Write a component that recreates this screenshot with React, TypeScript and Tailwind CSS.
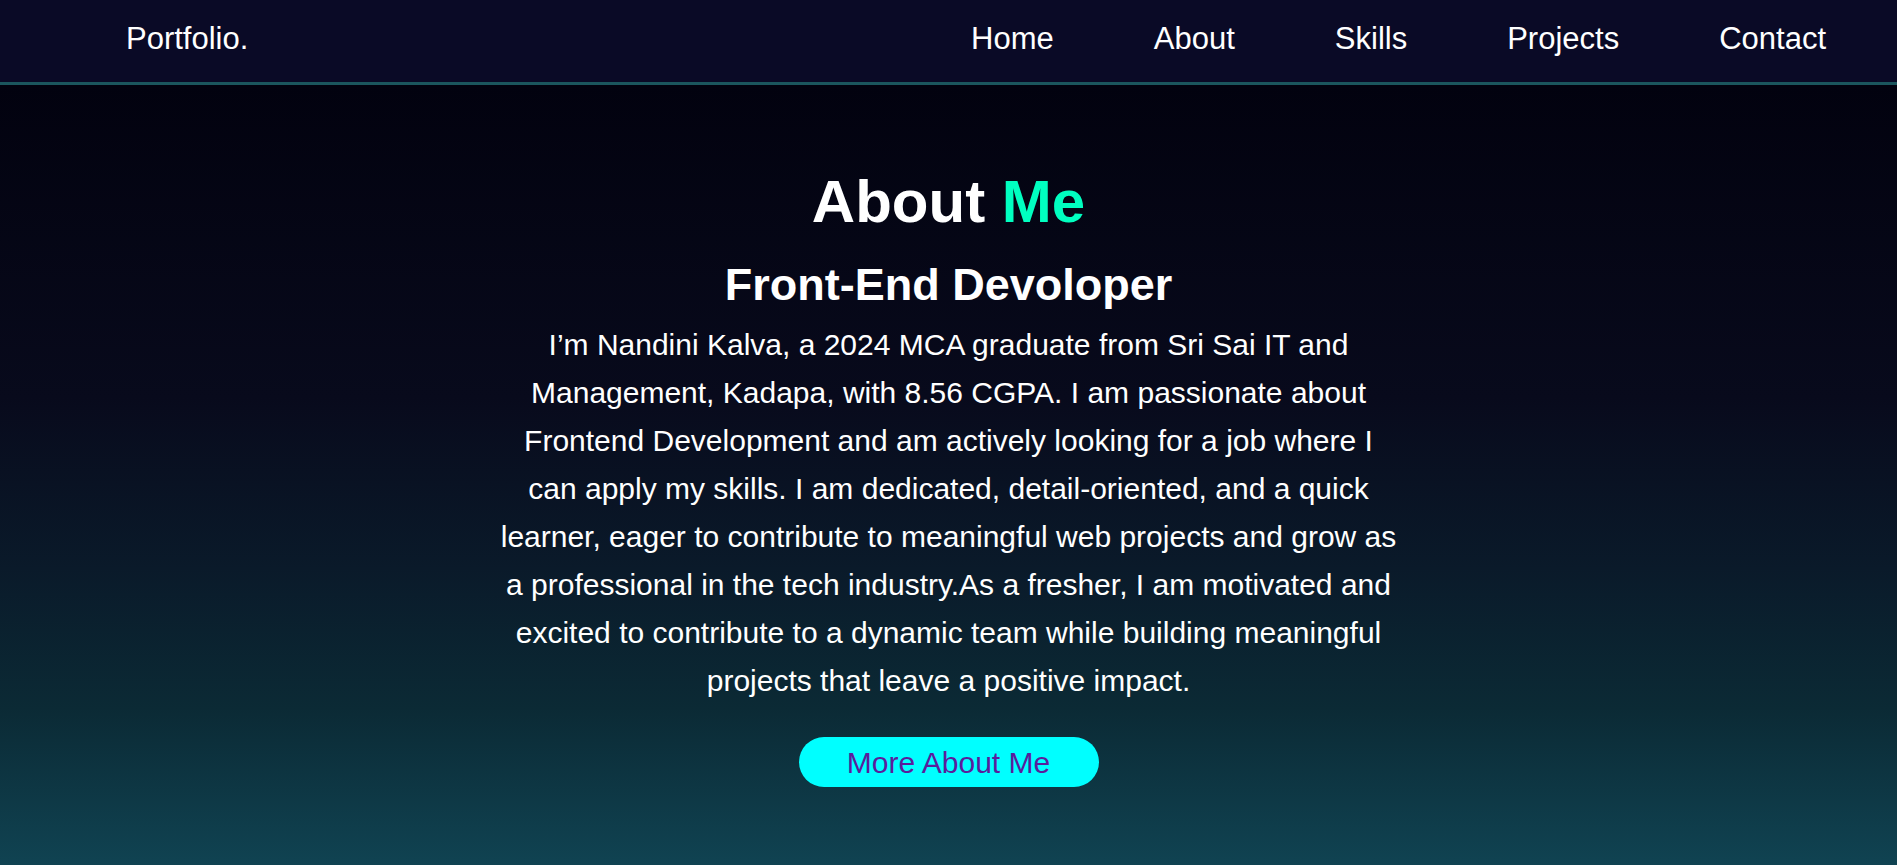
const links = ["Home", "About", "Skills", "Projects", "Contact"];

const App = () => {
  return (
    <div className="flex min-h-screen flex-col bg-[#02020f] font-['Liberation_Sans',Arial,sans-serif] text-white">
      <nav className="flex h-[85px] shrink-0 items-center justify-between border-b-[3px] border-[#1b565e] bg-[#0a0a26] pb-1 pl-[126px] pr-[71px] text-[31px]">
        <div>Portfolio.</div>
        <ul className="flex gap-[100px]">
          {links.map((link) => (
            <li key={link}>
              <a href="#">{link}</a>
            </li>
          ))}
        </ul>
      </nav>
      <main className="flex flex-1 flex-col items-center bg-[linear-gradient(to_bottom,#02020f_0%,#080a1c_40%,#0a1a2a_62%,#0b2a35_80%,#104352_100%)] pt-[82px] text-center">
        <h1 className="text-[60px] font-bold leading-[69px]">
          About <span className="text-[#00ffc0]">Me</span>
        </h1>
        <h2 className="mt-[23px] text-[45px] font-bold leading-[52px]">
          Front-End Devoloper
        </h2>
        <p className="mt-[10px] w-[900px] text-[30px] leading-[48px]">
          I’m Nandini Kalva, a 2024 MCA graduate from Sri Sai IT and
          Management, Kadapa, with 8.56 CGPA. I am passionate about Frontend
          Development and am actively looking for a job where I can apply my
          skills. I am dedicated, detail-oriented, and a quick learner, eager
          to contribute to meaningful web projects and grow as a professional
          in the tech industry.As a fresher, I am motivated and excited to
          contribute to a dynamic team while building meaningful projects that
          leave a positive impact.
        </p>
        <button className="mt-[32px] mb-[78px] flex h-[50px] w-[300px] items-center justify-center rounded-full bg-[#00ffff] text-[30px] text-[#5a1d9c]">
          More About Me
        </button>
      </main>
    </div>
  );
};

export default App;
